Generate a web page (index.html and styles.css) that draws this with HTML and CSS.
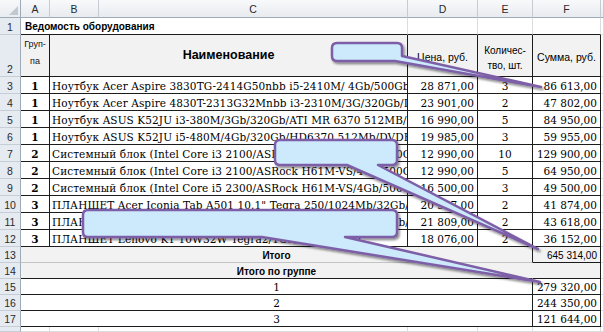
FILE: index.html
```html
<!DOCTYPE html>
<html lang="ru">
<head>
<meta charset="utf-8">
<title>Ведомость оборудования</title>
<link rel="stylesheet" href="styles.css">
</head>
<body>
<div class="page">
  <div class="sheet">
    <!-- column headers -->
    <div class="corner"><span class="tri"></span></div>
    <div class="ch">A</div>
    <div class="ch">B</div>
    <div class="ch">C</div>
    <div class="ch">D</div>
    <div class="ch">E</div>
    <div class="ch">F</div>
    <div class="ch"></div>

    <!-- row 1 -->
    <div class="rh">1</div>
    <div class="c top span3 title">Ведомость оборудования</div>
    <div class="c top"></div>
    <div class="c top"></div>
    <div class="c top"></div>
    <div class="c"></div>

    <!-- row 2 -->
    <div class="rh rh-bottom">2</div>
    <div class="c t hdr hdr-a">Груп-<br>па</div>
    <div class="c t hdr span2 hdr-name">Наименование</div>
    <div class="c t hdr hdr-sm">Цена, руб.</div>
    <div class="c t hdr hdr-sm hdr-qty">Количес-<br>тво, шт.</div>
    <div class="c t hdr hdr-sm">Сумма, руб.</div>
    <div class="c"></div>

    <!-- rows 3-12 -->
    <div class="rh">3</div>
    <div class="c t grp">1</div>
    <div class="c t span2 name">Ноутбук Acer Aspire 3830TG-2414G50nbb i5-2410M/ 4Gb/500Gb/DVDRW</div>
    <div class="c t num">28 871,00</div>
    <div class="c t qty">3</div>
    <div class="c t num">86 613,00</div>
    <div class="c"></div>

    <div class="rh">4</div>
    <div class="c t grp">1</div>
    <div class="c t span2 name">Ноутбук Acer Aspire 4830T-2313G32Mnbb i3-2310M/3G/320Gb/DVDRW</div>
    <div class="c t num">23 901,00</div>
    <div class="c t qty">2</div>
    <div class="c t num">47 802,00</div>
    <div class="c"></div>

    <div class="rh">5</div>
    <div class="c t grp">1</div>
    <div class="c t span2 name">Ноутбук ASUS K52JU i3-380M/3Gb/320Gb/ATI MR 6370 512MB/DVDRW</div>
    <div class="c t num">16 990,00</div>
    <div class="c t qty">5</div>
    <div class="c t num">84 950,00</div>
    <div class="c"></div>

    <div class="rh">6</div>
    <div class="c t grp">1</div>
    <div class="c t span2 name">Ноутбук ASUS K52JU i5-480M/4Gb/320Gb/HD6370 512Mb/DVDRW</div>
    <div class="c t num">19 985,00</div>
    <div class="c t qty">3</div>
    <div class="c t num">59 955,00</div>
    <div class="c"></div>

    <div class="rh">7</div>
    <div class="c t grp">2</div>
    <div class="c t span2 name">Системный блок (Intel Core i3 2100/ASRock H61M-VS/2Gb/500Gb/DVDRW)</div>
    <div class="c t num">12 990,00</div>
    <div class="c t qty">10</div>
    <div class="c t num">129 900,00</div>
    <div class="c"></div>

    <div class="rh">8</div>
    <div class="c t grp">2</div>
    <div class="c t span2 name">Системный блок (Intel Core i3 2100/ASRock H61M-VS/4Gb/500G/DVDRW)</div>
    <div class="c t num">12 990,00</div>
    <div class="c t qty">5</div>
    <div class="c t num">64 950,00</div>
    <div class="c"></div>

    <div class="rh">9</div>
    <div class="c t grp">2</div>
    <div class="c t span2 name">Системный блок (Intel Core i5 2300/ASRock H61M-VS/4Gb/500Gb/DVDRW)</div>
    <div class="c t num">16 500,00</div>
    <div class="c t qty">3</div>
    <div class="c t num">49 500,00</div>
    <div class="c"></div>

    <div class="rh">10</div>
    <div class="c t grp">3</div>
    <div class="c t span2 name">ПЛАНШЕТ Acer Iconia Tab A501 10.1" Tegra 250/1024Mb/32Gb/HSDPA</div>
    <div class="c t num">20 937,00</div>
    <div class="c t qty">2</div>
    <div class="c t num">41 874,00</div>
    <div class="c"></div>

    <div class="rh">11</div>
    <div class="c t grp">3</div>
    <div class="c t span2 name">ПЛАНШЕТ Acer Iconia Tab A500 10.1" Tegra 250/1024Mb/16Gb/</div>
    <div class="c t num">21 809,00</div>
    <div class="c t qty">2</div>
    <div class="c t num">43 618,00</div>
    <div class="c"></div>

    <div class="rh">12</div>
    <div class="c t grp">3</div>
    <div class="c t span2 name">ПЛАНШЕТ Lenovo K1 10W32W Tegra2/1Gb/32Gb/Cam2</div>
    <div class="c t num">18 076,00</div>
    <div class="c t qty">2</div>
    <div class="c t num">36 152,00</div>
    <div class="c"></div>

    <!-- row 13 -->
    <div class="rh">13</div>
    <div class="c span5 total total-label">Итого</div>
    <div class="c total total-sum">645 314,00</div>
    <div class="c"></div>

    <!-- row 14 -->
    <div class="rh">14</div>
    <div class="c span5 total group-head">Итого по группе</div>
    <div class="c total group-f"></div>
    <div class="c"></div>

    <!-- rows 15-17 -->
    <div class="rh">15</div>
    <div class="c t span5 gnum">1</div>
    <div class="c t num">279 320,00</div>
    <div class="c"></div>

    <div class="rh">16</div>
    <div class="c t span5 gnum">2</div>
    <div class="c t num">244 350,00</div>
    <div class="c"></div>

    <div class="rh">17</div>
    <div class="c t span5 gnum">3</div>
    <div class="c t num">121 644,00</div>
    <div class="c"></div>

    <!-- row 18 (partial) -->
    <div class="rh"></div>
    <div class="c"></div>
    <div class="c"></div>
    <div class="c"></div>
    <div class="c"></div>
    <div class="c"></div>
    <div class="c"></div>
    <div class="c"></div>
  </div>

  <svg class="callouts" width="604" height="332" viewBox="0 0 604 332" aria-hidden="true">
    <defs>
      <filter id="sh" x="-10%" y="-20%" width="130%" height="160%">
        <feDropShadow dx="1.5" dy="2" stdDeviation="1.2" flood-color="#000" flood-opacity="0.45"/>
      </filter>
    </defs>
    <path class="callout" d="M337,43 H397 Q402,43 402,48 V56 L541,87 L395,61 H337 Q332,61 332,56 V48 Q332,43 337,43 Z"/>
    <path class="callout" d="M280,140 H392 Q397,140 397,145 V160 Q397,165 392,165 H378 L538,249 L347,165 H280 Q275,165 275,160 V145 Q275,140 280,140 Z"/>
    <path class="callout" d="M88,210 H392 Q397,210 397,215 V232 Q397,237 392,237 H345 L540,282 L262,237 H88 Q83,237 83,232 V215 Q83,210 88,210 Z"/>
  </svg>
</div>
</body>
</html>
```

FILE: styles.css
```css
html, body {
  margin: 0;
  padding: 0;
  background: #ffffff;
}

body {
  width: 604px;
  height: 332px;
  overflow: hidden;
  font-family: "Liberation Sans", Arial, sans-serif;
  color: #000;
}

.page {
  position: relative;
  width: 604px;
  height: 332px;
}

.sheet {
  display: grid;
  grid-template-columns: 21px 29px 49px 309px 70px 55px 68px 3px;
  grid-template-rows: 18px 17px 42px repeat(10, 17px) repeat(5, 16px) 5px;
}

.sheet > div {
  box-sizing: border-box;
  min-width: 0;
  overflow: hidden;
  white-space: nowrap;
  display: flex;
  align-items: center;
}

/* headers */
.corner {
  position: relative;
  background: linear-gradient(#f7f8fa, #e9ecf0);
  border-right: 1px solid #9eaab6;
  border-bottom: 1px solid #9eaab6;
}

.tri {
  position: absolute;
  right: 2px;
  bottom: 2px;
  width: 0;
  height: 0;
  border-left: 9px solid transparent;
  border-bottom: 9px solid #c2c8d0;
}

.ch {
  justify-content: center;
  background: linear-gradient(#f8f9fb, #e8ebef);
  border-right: 1px solid #c6cbd2;
  border-bottom: 1px solid #9eaab6;
  font-size: 10.5px;
  color: #2a2a2a;
}

.rh {
  justify-content: center;
  background: #e6ebf1;
  border-right: 1px solid #9eaab6;
  border-bottom: 1px solid #c6cdd6;
  font-size: 10.5px;
  color: #2a2a2a;
  padding-top: 1px;
}

.rh-bottom {
  align-items: flex-end !important;
  padding-bottom: 1px;
}

/* cells */
.c {
  border-right: 1px solid #dadcde;
  border-bottom: 1px solid #dadcde;
  background: #ffffff;
}

.span2 { grid-column: span 2; }
.span3 { grid-column: span 3; }
.span5 { grid-column: span 5; }

.top {
  border-bottom-color: #1c1c1c;
}

.t {
  border-right-color: #1c1c1c;
  border-bottom-color: #1c1c1c;
}

.title {
  font-weight: bold;
  font-size: 10px;
  padding-left: 4px;
  padding-top: 1px;
}

.hdr {
  background: #f2f2f2;
  justify-content: center;
  text-align: center;
}

.hdr-a {
  font-size: 9px;
  line-height: 17px;
  padding-bottom: 5px;
  color: #111;
}

.hdr-name {
  font-weight: bold;
  font-size: 12.5px;
  padding-bottom: 1px;
}

.hdr-sm {
  font-size: 10.5px;
  padding-top: 4px;
  line-height: 15px;
}

.hdr-qty {
  font-size: 10px;
  white-space: normal;
}

.grp,
.name,
.num,
.qty,
.gnum {
  font-family: "DejaVu Serif", "Liberation Serif", serif;
  font-size: 10.5px;
  padding-top: 1px;
}

.grp {
  justify-content: center;
  font-weight: bold;
}

.name {
  padding-left: 2px;
  letter-spacing: 0.1px;
}

.num {
  justify-content: flex-end;
  padding-right: 3px;
}

.qty {
  justify-content: center;
}

.gnum {
  justify-content: center;
}

.total {
  background: #f2f2f2;
}

.total-label {
  justify-content: center;
  font-weight: bold;
  font-size: 10px;
  border-right-color: #1c1c1c;
  border-bottom-color: #c4c4c4;
  padding-top: 1px;
}

.total-sum {
  justify-content: flex-end;
  font-size: 10px;
  padding-right: 3px;
  border-right-color: #1c1c1c;
  border-bottom-color: #1c1c1c;
  padding-top: 1px;
}

.group-head {
  justify-content: center;
  font-weight: bold;
  font-size: 10px;
  border-right-color: #f2f2f2;
  border-bottom-color: #1c1c1c;
  padding-top: 1px;
}

.group-f {
  border-right-color: #1c1c1c;
  border-bottom-color: #1c1c1c;
}

/* callouts overlay */
.callouts {
  position: absolute;
  left: 0;
  top: 0;
  pointer-events: none;
}

.callout {
  fill: #cde9fc;
  stroke: #7d5fa7;
  stroke-width: 2.5;
  stroke-linejoin: round;
  filter: url(#sh);
}
```
